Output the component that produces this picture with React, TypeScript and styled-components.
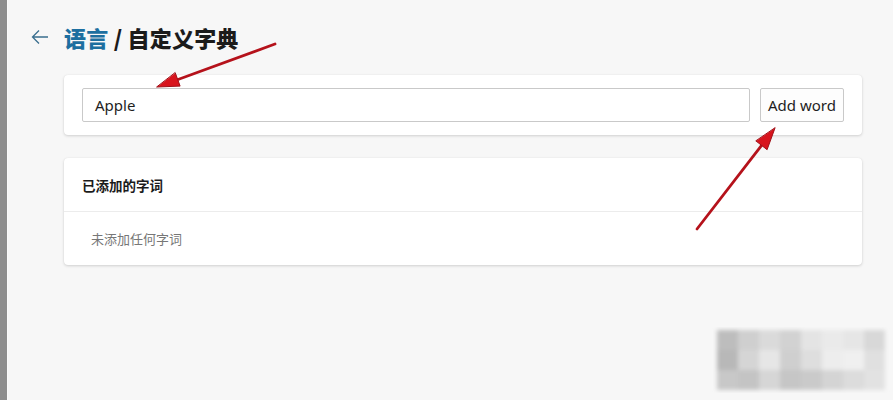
import React from "react";
import styled, { createGlobalStyle } from "styled-components";

const Global = createGlobalStyle`
  html, body { margin: 0; padding: 0; background: #f7f7f7; }
  body { font-family: "Noto Sans", "Noto Sans CJK SC", sans-serif; }
`;

const Page = styled.div`
  position: relative;
  display: flex;
  width: 893px;
  height: 400px;
  overflow: hidden;
  background: #f7f7f7;
`;

const SideBar = styled.div`
  width: 7px;
  flex: none;
  background: #8e8e8e;
  border-right: 1px solid #fbfbfb;
`;

const Main = styled.div`
  flex: 1;
  display: flex;
  flex-direction: column;
  padding-top: 22px;
`;

const Header = styled.div`
  display: flex;
  align-items: center;
  gap: 14px;
  padding-left: 22px;
  height: 30px;
`;

const BackButton = styled.div`
  width: 20px;
  height: 20px;
  display: flex;
  align-items: center;
  justify-content: center;
`;

const Title = styled.h1`
  margin: 0;
  font-family: "Noto Sans CJK SC", sans-serif;
  font-size: 22px;
  font-weight: 900;
  color: #1b1b1b;
  letter-spacing: 0.2px;
`;

const Crumb = styled.span`
  color: #1d6fa0;
`;

const Content = styled.div`
  display: flex;
  flex-direction: column;
  gap: 23px;
  margin-left: 56px;
  margin-top: 23px;
  width: 798px;
`;

const Card = styled.div`
  background: #fff;
  border-radius: 4px;
  box-shadow: 0 1px 3px rgba(0, 0, 0, 0.16), 0 0 1px rgba(0, 0, 0, 0.08);
`;

const AddRow = styled.div`
  display: flex;
  gap: 10px;
  padding: 13px 18px 13px 18px;
`;

const WordInput = styled.div`
  flex: 1;
  height: 34px;
  box-sizing: border-box;
  border: 1px solid #c9c9c9;
  border-radius: 2px;
  display: flex;
  align-items: center;
  padding-left: 12px;
  font-size: 15px;
  color: #1e1e1e;
`;

const AddButton = styled.div`
  width: 84px;
  height: 34px;
  box-sizing: border-box;
  border: 1px solid #c9c9c9;
  border-radius: 2px;
  background: #fdfdfd;
  display: flex;
  align-items: center;
  justify-content: center;
  font-size: 15px;
  color: #1e1e1e;
`;

const SectionHeader = styled.div`
  height: 53px;
  display: flex;
  align-items: center;
  padding-left: 18px;
  border-bottom: 1px solid #ececec;
  font-family: "Noto Sans CJK SC", sans-serif;
  font-size: 13.5px;
  font-weight: 700;
  color: #1b1b1b;
`;

const EmptyRow = styled.div`
  height: 53px;
  display: flex;
  align-items: center;
  padding-left: 27px;
  font-family: "Noto Sans CJK SC", sans-serif;
  font-size: 13px;
  color: #777;
`;

const Overlay = styled.svg`
  position: absolute;
  left: 0;
  top: 0;
  pointer-events: none;
`;

const mosaic = [
  ["#bdbdbd", "#cfcfcf", "#dadada", "#d2d2d2", "#e4e4e4", "#eaeaea", "#e6e6e6", "#d8d8d8"],
  ["#b8b8b8", "#d5d5d5", "#e6e6e6", "#cfcfcf", "#dedede", "#ededed", "#f0f0f0", "#e0e0e0"],
  ["#c8c8c8", "#c4c4c4", "#d6d6d6", "#c6c6c6", "#cacaca", "#d4d4d4", "#dcdcdc", "#e2e2e2"],
];

export default function App() {
  return (
    <>
      <Global />
      <Page>
        <SideBar />
        <Main>
          <Header>
            <BackButton>
              <svg width="18" height="16" viewBox="0 0 18 16" fill="none">
                <path d="M17 8H2M8 1.5L1.5 8L8 14.5" stroke="#3a6f8f" strokeWidth="1.3" />
              </svg>
            </BackButton>
            <Title>
              <Crumb>语言</Crumb> / 自定义字典
            </Title>
          </Header>
          <Content>
            <Card>
              <AddRow>
                <WordInput>Apple</WordInput>
                <AddButton>Add word</AddButton>
              </AddRow>
            </Card>
            <Card>
              <SectionHeader>已添加的字词</SectionHeader>
              <EmptyRow>未添加任何字词</EmptyRow>
            </Card>
          </Content>
        </Main>
        <Overlay width="893" height="400" viewBox="0 0 893 400">
          <defs>
            <filter id="blur" x="-5%" y="-5%" width="110%" height="110%">
              <feGaussianBlur stdDeviation="2" />
            </filter>
          </defs>
          <g filter="url(#blur)">
            {mosaic.map((row, r) =>
              row.map((c, i) => (
                <rect key={`${r}-${i}`} x={717 + i * 21} y={330 + r * 20} width="21" height="20" fill={c} />
              ))
            )}
          </g>
          <g stroke="#b5121b" strokeWidth="2.8" strokeLinecap="round" fill="#d8141d">
            <line x1="275" y1="44" x2="178" y2="79.5" />
            <polygon points="157,87 180.1,86.1 175.3,72.9" stroke="#a01018" strokeWidth="1" />
            <line x1="697" y1="229" x2="761.6" y2="145.4" />
            <polygon points="775,128 767.1,149.7 756.1,141.1" stroke="#a01018" strokeWidth="1" />
          </g>
        </Overlay>
      </Page>
    </>
  );
}
